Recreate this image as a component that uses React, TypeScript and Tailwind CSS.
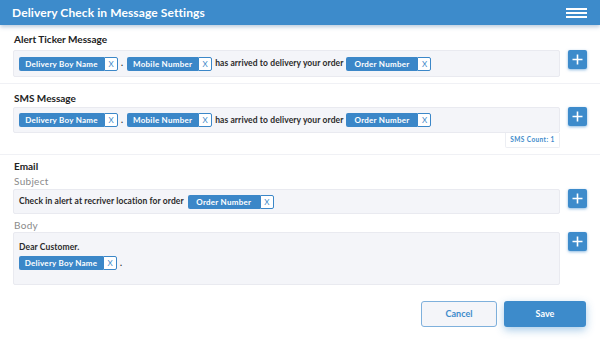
import React from 'react';

const font = "font-['Lato','Liberation_Sans',sans-serif]";

function Chip({ label, blueW }: { label: string; blueW: string }) {
  return (
    <div className="flex h-[14px] items-stretch shrink-0">
      <span className={`${blueW} flex items-center justify-center bg-[#3b87c8] rounded-l-[2px] text-white text-[8px] font-bold tracking-[0.25px]`}>
        {label}
      </span>
      <span className="w-[14px] flex items-center justify-center bg-white border border-[#3b87c8] rounded-r-[2px] text-[#3b87c8] text-[8px] leading-none">
        X
      </span>
    </div>
  );
}

function PlusButton() {
  return (
    <button className="w-[19px] h-[19px] ml-[8px] shrink-0 rounded-[2px] bg-[#3d8bcb] flex items-center justify-center shadow-[0_1px_3px_rgba(61,139,203,0.6)]">
      <svg width="11" height="11" viewBox="0 0 11 11">
        <path d="M5.5 0.5v10M0.5 5.5h10" stroke="white" strokeWidth="1.6" />
      </svg>
    </button>
  );
}

function Txt({ children }: { children: React.ReactNode }) {
  return <span className="text-[8.5px] font-bold text-[#2b2b2b] whitespace-nowrap tracking-[0.1px]">{children}</span>;
}

function MessageRow({ h }: { h: string }) {
  return (
    <div className={`flex-1 ${h} bg-[#f4f5f9] border border-[#e9eaf0] rounded-[2px] flex items-center gap-[3px] pl-[5px]`}>
      <Chip label="Delivery Boy Name" blueW="w-[85px]" />
      <Txt>.</Txt>
      <Chip label="Mobile Number" blueW="w-[71px] ml-[1px]" />
      <Txt>has arrived to delivery your order</Txt>
      <Chip label="Order Number" blueW="w-[71px]" />
    </div>
  );
}

export default function App() {
  return (
    <div className={`w-[600px] h-[341px] bg-white overflow-hidden ${font}`}>
      {/* Header */}
      <header className="relative z-10 h-[25px] bg-[#3d8bcb] flex items-center justify-between pl-[12px] pr-[13px] shadow-[0_2px_4px_rgba(60,110,160,0.35)]">
        <h1 className="text-white text-[12px] font-bold tracking-[0.1px]">Delivery Check in Message Settings</h1>
        <div className="flex flex-col gap-[2px] w-[21px]">
          <span className="h-[2px] bg-white" />
          <span className="h-[2px] bg-white" />
          <span className="h-[2px] bg-white" />
        </div>
      </header>

      {/* Alert ticker */}
      <section className="px-[13px] pt-[8px] pb-[6px] border-b border-[#f0f1f5]">
        <p className="h-[12px] leading-[12px] text-[10px] font-bold text-[#222] mb-[5px] ml-[1px]">Alert Ticker Message</p>
        <div className="flex items-start">
          <MessageRow h="h-[27px]" />
          <PlusButton />
        </div>
      </section>

      {/* SMS */}
      <section className="px-[13px] pt-[8px] pb-[6px] border-b border-[#f0f1f5]">
        <p className="h-[12px] leading-[12px] text-[10px] font-bold text-[#222] mb-[3px] ml-[1px]">SMS Message</p>
        <div className="flex items-start">
          <div className="flex-1 flex flex-col items-end">
            <div className="w-full flex"><MessageRow h="h-[26px]" /></div>
            <div className="w-[55px] h-[15px] bg-white border border-t-0 border-[#eceef3] rounded-b-[2px] flex items-center justify-center text-[6.5px] font-bold text-[#3d8bcb] tracking-[0.4px]">
              SMS Count: 1
            </div>
          </div>
          <PlusButton />
        </div>
      </section>

      {/* Email */}
      <section className="px-[13px] pt-[5px]">
        <p className="h-[12px] leading-[12px] text-[10px] font-bold text-[#222] ml-[1px]">Email</p>
        <p className="mt-[3px] h-[12px] leading-[12px] text-[10px] text-[#8a8a8a] tracking-[0.3px] ml-[1px]">Subject</p>
        <div className="flex items-start mt-[2px]">
          <div className="flex-1 h-[25px] bg-[#f4f5f9] border border-[#e9eaf0] rounded-[2px] flex items-center gap-[4px] pl-[5px]">
            <Txt>Check in alert at recriver location for order</Txt>
            <Chip label="Order Number" blueW="w-[72px]" />
          </div>
          <PlusButton />
        </div>
        <p className="mt-[5px] h-[12px] leading-[12px] text-[10px] text-[#8a8a8a] tracking-[0.3px] ml-[1px]">Body</p>
        <div className="flex items-start mt-[1px]">
          <div className="flex-1 h-[53px] bg-[#f4f5f9] border border-[#e9eaf0] rounded-[2px] pl-[5px] pt-[6px]">
            <p className="h-[10px] leading-[10px]"><Txt>Dear Customer.</Txt></p>
            <div className="flex items-center gap-[3px] mt-[7px]">
              <Chip label="Delivery Boy Name" blueW="w-[84px]" />
              <Txt>.</Txt>
            </div>
          </div>
          <PlusButton />
        </div>

        {/* Actions */}
        <div className="flex justify-end gap-[7px] mt-[16px] pr-[1px]">
          <button className="w-[76px] h-[26px] rounded-[3px] bg-[#f4f5f9] border border-[#7eb0dc] text-[#3d8bcb] text-[9px] font-bold">
            Cancel
          </button>
          <button className="w-[82px] h-[26px] rounded-[3px] bg-[#3d8bcb] text-white text-[9px] font-bold shadow-[0_3px_8px_rgba(61,139,203,0.45)]">
            Save
          </button>
        </div>
      </section>
    </div>
  );
}
